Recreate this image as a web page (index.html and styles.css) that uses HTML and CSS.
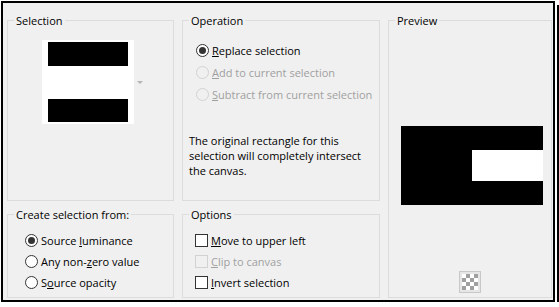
FILE: index.html
```html
<!DOCTYPE html>
<html>
<head>
<meta charset="utf-8">
<link rel="stylesheet" href="styles.css">
</head>
<body>
<div class="frame">
  <div class="dialog">
    <fieldset class="group g-selection">
      <legend>Selection</legend>
      <div class="thumb-row">
        <div class="thumb">
          <div class="bar bar-top"></div>
          <div class="bar-gap"></div>
          <div class="bar bar-bottom"></div>
        </div>
        <span class="drop-arrow"></span>
      </div>
    </fieldset>

    <fieldset class="group g-operation">
      <legend>Operation</legend>
      <div class="choice-list op-list">
        <div class="choice"><span class="radio checked"></span><span class="label"><u>R</u>eplace selection</span></div>
        <div class="choice disabled"><span class="radio"></span><span class="label"><u>A</u>dd to current selection</span></div>
        <div class="choice disabled"><span class="radio"></span><span class="label"><u>S</u>ubtract from current selection</span></div>
      </div>
      <p class="note">The original rectangle for this<br>selection will completely intersect<br>the canvas.</p>
    </fieldset>

    <fieldset class="group g-preview">
      <legend>Preview</legend>
      <div class="preview-img">
        <div class="preview-hole"></div>
      </div>
      <div class="checker-btn"><span class="checker"></span></div>
    </fieldset>

    <fieldset class="group g-source">
      <legend>Create selection from:</legend>
      <div class="choice-list src-list">
        <div class="choice"><span class="radio checked"></span><span class="label">Source <u>l</u>uminance</span></div>
        <div class="choice"><span class="radio"></span><span class="label">Any non-<u>z</u>ero value</span></div>
        <div class="choice"><span class="radio"></span><span class="label">S<u>o</u>urce opacity</span></div>
      </div>
    </fieldset>

    <fieldset class="group g-options">
      <legend>Options</legend>
      <div class="choice-list opt-list">
        <div class="choice"><span class="check"></span><span class="label"><u>M</u>ove to upper left</span></div>
        <div class="choice disabled"><span class="check"></span><span class="label"><u>C</u>lip to canvas</span></div>
        <div class="choice"><span class="check"></span><span class="label"><u>I</u>nvert selection</span></div>
      </div>
    </fieldset>
  </div>
</div>
</body>
</html>
```

FILE: styles.css
```css
* { box-sizing: border-box; }

html, body {
  margin: 0;
  padding: 0;
  background: #fff;
}

body {
  font-family: "Open Sans", "Noto Sans", sans-serif;
  font-size: 11px;
  line-height: 13px;
  color: #000;
}

.frame {
  margin: 1px 0 0 1px;
  width: 554px;
  height: 301px;
  border: 2px solid #000;
  background: #f0f0f0;
  box-shadow: 2px 2px 0 #fff, 4px 4px 0 #000;
}

.dialog {
  display: grid;
  grid-template-columns: 167px 198px 164px;
  grid-template-rows: 187px 90px;
  column-gap: 8px;
  row-gap: 7px;
  padding: 11px 2px 2px 4px;
}

.group {
  margin: 0;
  padding: 0;
  min-width: 0;
  border: 1px solid #dcdcdc;
}

.group legend {
  margin-left: 6px;
  padding: 0 2px;
  font-size: 11px;
  line-height: 13px;
}

.g-selection { grid-column: 1; grid-row: 1; }
.g-operation { grid-column: 2; grid-row: 1; }
.g-preview   { grid-column: 3; grid-row: 1 / span 2; }
.g-source    { grid-column: 1; grid-row: 2; }
.g-options   { grid-column: 2; grid-row: 2; }

/* Selection thumbnail */
.thumb-row {
  display: flex;
  align-items: center;
  margin: 13px 0 0 34px;
}

.thumb {
  width: 92px;
  height: 84px;
  background: #fff;
  padding: 2px 6px;
  display: flex;
  flex-direction: column;
}

.bar { background: #000; }
.bar-top { height: 24px; }
.bar-gap { height: 33px; }
.bar-bottom { height: 23px; }

.drop-arrow {
  margin-left: 3px;
  width: 0;
  height: 0;
  border-left: 3px solid transparent;
  border-right: 3px solid transparent;
  border-top: 3px solid #b4b4b4;
}

/* Radio / checkbox lists */
.choice-list {
  display: flex;
  flex-direction: column;
}

.choice {
  display: flex;
  align-items: center;
  white-space: nowrap;
}

.op-list { margin: 12px 0 0 13px; }
.op-list .choice { height: 22px; }

.src-list { margin: 9px 0 0 17px; }
.src-list .choice { height: 21px; }

.opt-list { margin: 9px 0 0 12px; }
.opt-list .choice { height: 21px; }

.label { margin-left: 3px; }
.label u { text-underline-offset: 1px; }

.radio {
  width: 13px;
  height: 13px;
  border: 1px solid #333;
  border-radius: 50%;
  background: #fff;
  display: flex;
  align-items: center;
  justify-content: center;
  flex: none;
}

.radio.checked::after {
  content: "";
  width: 7px;
  height: 7px;
  border-radius: 50%;
  background: #333;
}

.check {
  width: 13px;
  height: 13px;
  border: 1px solid #333;
  background: #fff;
  flex: none;
}

.choice.disabled .label { color: #a0a0a0; }
.choice.disabled .radio,
.choice.disabled .check {
  border-color: #d2d2d2;
  background: #f0f0f0;
}

.note {
  margin: 28px 0 0 6px;
  line-height: 15px;
}

/* Preview */
.preview-img {
  margin: 99px 0 0 12px;
  width: 142px;
  height: 79px;
  background: #000;
  padding: 24px 0 0 71px;
}

.preview-hole {
  width: 71px;
  height: 31px;
  background: #fff;
}

.checker-btn {
  margin: 66px 0 0 70px;
  width: 22px;
  height: 22px;
  border: 1px solid #c8c8c8;
  background: #e6e6e6;
  display: flex;
  align-items: center;
  justify-content: center;
}

.checker {
  width: 16px;
  height: 16px;
  background-color: #fff;
  background-image:
    linear-gradient(45deg, #a0a0a0 25%, transparent 25%, transparent 75%, #a0a0a0 75%),
    linear-gradient(45deg, #a0a0a0 25%, transparent 25%, transparent 75%, #a0a0a0 75%);
  background-size: 8px 8px;
  background-position: 0 0, 4px 4px;
}
```
